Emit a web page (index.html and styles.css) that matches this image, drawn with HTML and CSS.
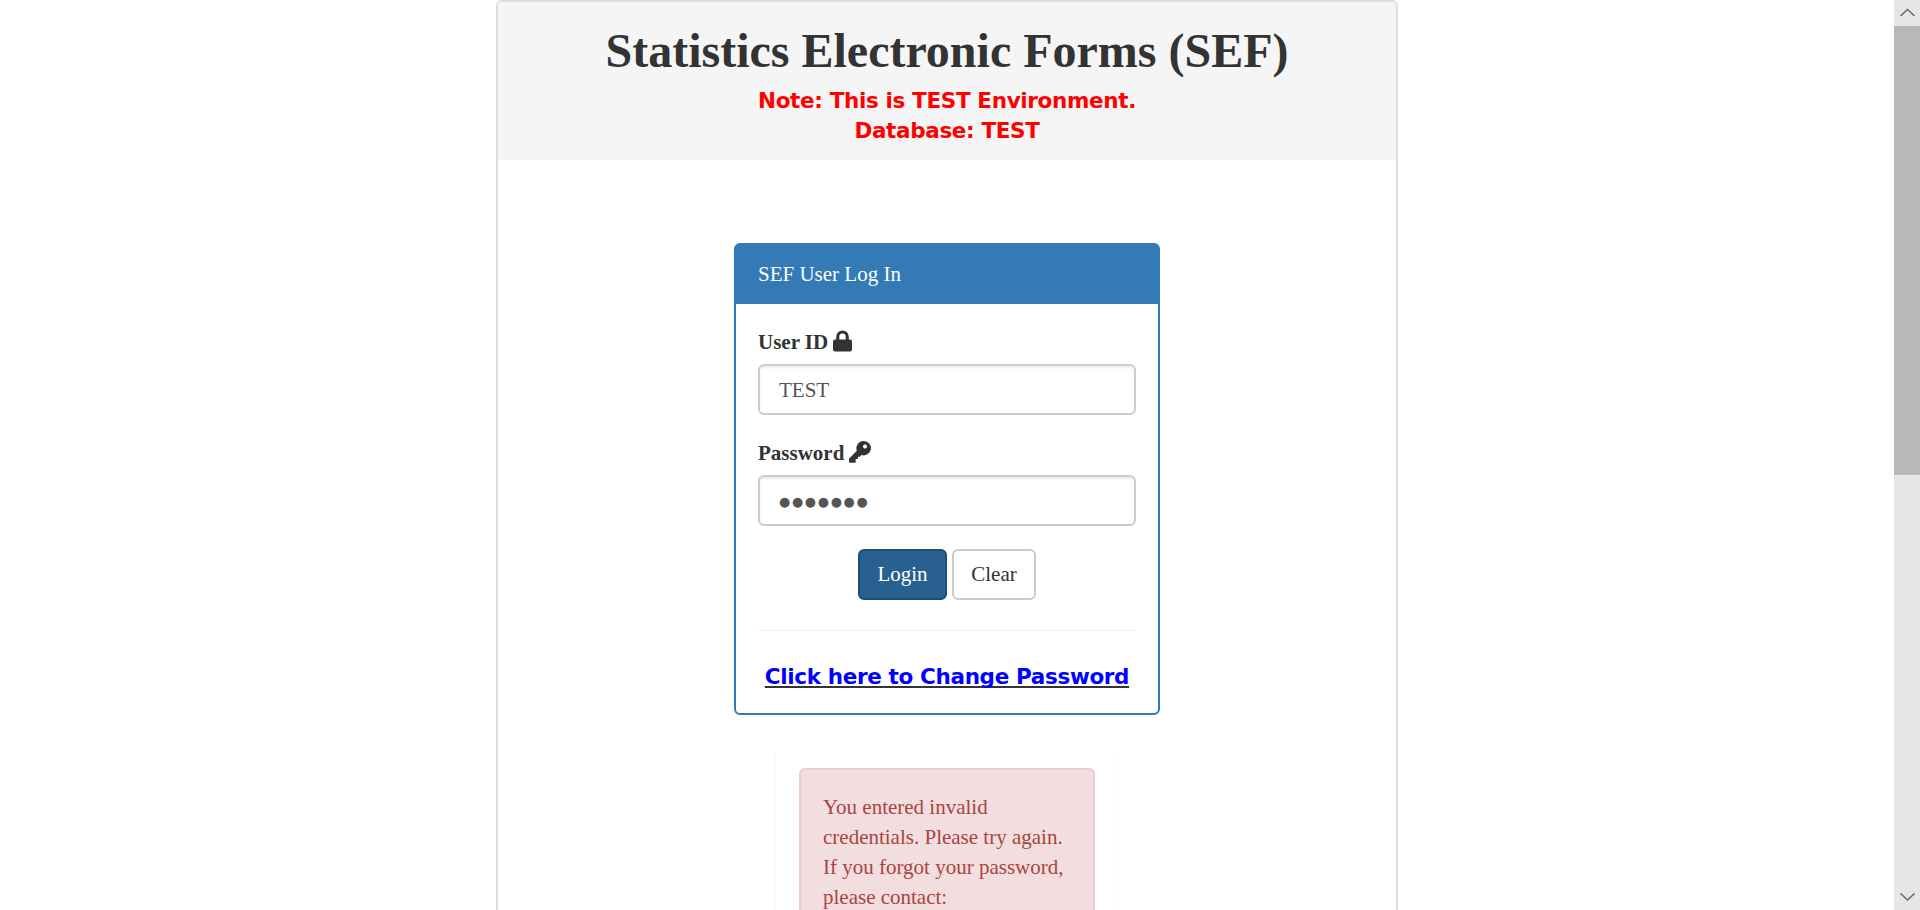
FILE: index.html
```html
<!DOCTYPE html>
<html lang="en">
<head>
<meta charset="utf-8">
<title>Statistics Electronic Forms (SEF)</title>
<link rel="stylesheet" href="styles.css">
</head>
<body>
<main class="page">
  <div class="outer-panel">
    <header class="outer-heading">
      <h1 class="title"><span>Statistics Electronic Forms (SEF)</span></h1>
      <p class="note"><span class="note-env">Note: This is TEST Environment.</span><br><span class="note-db">Database: TEST</span></p>
    </header>
    <section class="login-panel">
      <div class="login-heading"><span>SEF User Log In</span></div>
      <form class="login-body">
        <label class="label"><span>User ID</span>
          <svg class="icon-lock" viewBox="0 0 19 22"><path d="M2 9.500H3.200V6.700a6.300 6.300 0 0 1 12.600 0v2.800H17q2 0 2 2v8q0 2-2 2H2q-2 0-2-2v-8q0-2 2-2zM6.300 9.500h6.400V6.800a3.200 3.200 0 0 0-6.400 0z" fill-rule="evenodd"/></svg>
        </label>
        <div class="input"><span>TEST</span></div>
        <label class="label"><span>Password</span>
          <svg class="icon-key" viewBox="0 0 22 22"><path d="M14.600 0a7.200 7.200 0 1 1-2.200 14l-1.700 1.800H8.900v2.300H6.700V21q0 .7-.7.7H.8Q0 21.700 0 21v-3.200L7.800 9.800A7.300 7.300 0 0 1 14.600 0zm1.400 3.600a2 2 0 1 0 .01 0z" fill-rule="evenodd"/></svg>
        </label>
        <div class="input input-password"><span class="dots">●●●●●●●</span></div>
        <div class="actions">
          <button type="button" class="btn btn-primary">Login</button>
          <button type="button" class="btn btn-default">Clear</button>
        </div>
        <hr class="rule">
        <div class="change"><a href="#">Click here to Change Password</a></div>
      </form>
    </section>
    <section class="message">
      <div class="alert">You entered invalid<br>credentials. Please try again.<br>If you forgot your password,<br>please contact:</div>
    </section>
  </div>
</main>
<aside class="scrollbar">
  <svg class="arrow" viewBox="0 0 26 26"><path d="M6.500 16 13.500 9.500 20.500 16"/></svg>
  <div class="thumb"></div>
  <svg class="arrow arrow-down" viewBox="0 0 26 26"><path d="M6.500 9.500 13.500 16 20.500 9.500"/></svg>
</aside>
</body>
</html>
```
FILE: styles.css
```css
* { box-sizing: border-box; }
body {
  margin: 0;
  height: 910px;
  overflow: hidden;
  display: flex;
  background: #fff;
  color: #333;
  font: 21px/30px "Liberation Serif", "Times New Roman", serif;
}
.page { flex: 1; height: 910px; overflow: hidden; }
.outer-panel {
  width: 902px;
  height: 1300px;
  margin: 0 auto;
  border: 2px solid #ddd;
  border-radius: 6px;
}
.outer-heading {
  height: 158px;
  padding-top: 22px;
  background: #f5f5f5;
  border-radius: 4px 4px 0 0;
  text-align: center;
}
.title { margin: 0; font-size: 48px; line-height: 54px; padding-bottom: 1px; font-weight: bold; white-space: nowrap; }
.note { margin: 7px 0 0; color: #f00; font: bold 21.500px/30px "DejaVu Sans", Verdana, sans-serif; letter-spacing: -.35px; white-space: nowrap; }
.login-panel {
  width: 426px;
  height: 472px;
  margin: 83px auto 0;
  border: 2px solid #337ab7;
  border-radius: 6px;
}
.login-heading { height: 59px; padding: 14px 22px; background: #337ab7; color: #fff; }
.login-body { padding: 23px 22px 0; }
.label { display: flex; align-items: center; gap: 5px; height: 30px; margin-bottom: 7px; font-weight: bold; }
.icon-lock { width: 19px; height: 22px; margin-top: -2px; fill: #333; }
.icon-key { width: 22px; height: 22px; margin-top: -2px; fill: #333; }
.input {
  height: 51px;
  margin-bottom: 23px;
  padding: 9px 19px;
  border: 2px solid #ccc;
  border-radius: 6px;
  box-shadow: inset 0 2px 2px rgba(0, 0, 0, .075);
  color: #555;
}
.input-password { padding-top: 7px; }
.dots { font: 12.800px/30px "DejaVu Sans", sans-serif; letter-spacing: 1.750px; }
.actions { display: flex; justify-content: center; gap: 5px; }
.btn { height: 51px; padding: 0 0 2px; border: 2px solid; border-radius: 6px; font: inherit; }
.btn-primary { width: 89px; background: #286090; border-color: #204d74; color: #fff; }
.btn-default { width: 84px; background: #fff; border-color: #ccc; color: #333; }
.rule { height: 1px; margin: 30px 0 31px; border: 0; background: #eee; }
.change { color: #333; font: bold 21.500px/30px "DejaVu Sans", Verdana, sans-serif; letter-spacing: -.35px; text-align: center; white-space: nowrap; }
.change a { color: #00f; text-decoration: underline 2px #333; text-underline-offset: 2px; text-decoration-skip-ink: none; }
.message { width: 344px; height: 600px; margin: 35px auto 0; padding: 18px 23px; border: solid #fafafa; border-width: 0 1px; }
.alert {
  height: 500px;
  padding: 22px;
  border: 2px solid #ebccd1;
  border-radius: 6px;
  background: #f2dede;
  color: #a94442;
  white-space: nowrap;
}
.scrollbar { display: flex; flex-direction: column; width: 26px; height: 910px; background: #e6e6e6; }
.arrow { width: 26px; height: 26px; fill: none; stroke: #666; stroke-width: 1.500; }
.thumb { height: 449px; background: #b8b8b8; }
.arrow-down { margin-top: auto; }
```
